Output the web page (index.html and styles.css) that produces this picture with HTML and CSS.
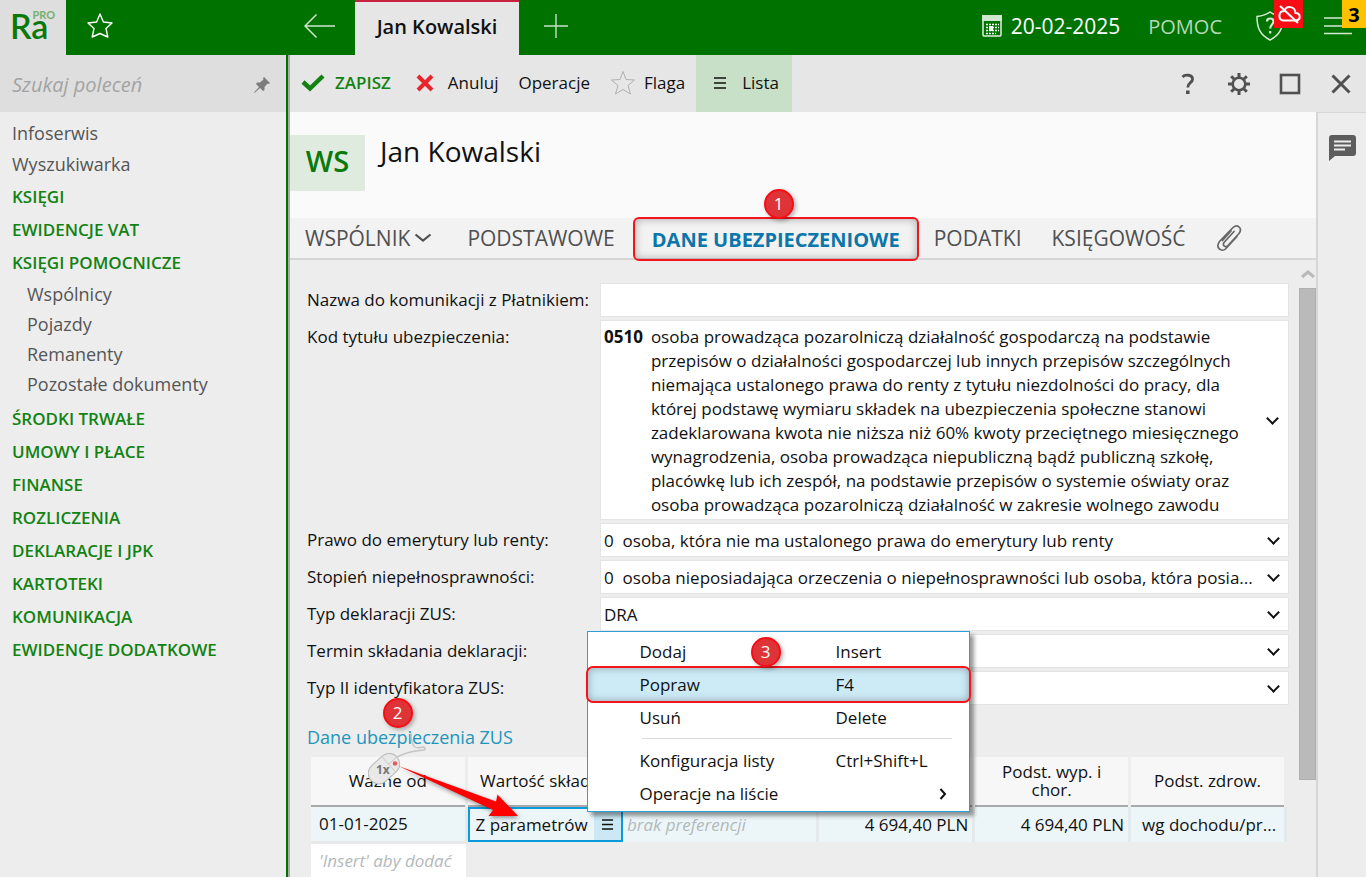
FILE: index.html
```
<!DOCTYPE html>
<html lang="pl">
<head>
    <meta charset="UTF-8">
    <meta name="viewport" content="width=device-width, initial-scale=1.0">
    <title>Jan Kowalski</title>
    <link rel="stylesheet" href="styles.css">
</head>
<body>
    <header class="topbar">
        <div class="logo">
            <span class="logo-ra">Ra</span><span class="logo-pro">PRO</span>
        </div>
        <button class="top-btn star-btn" aria-label="Ulubione">
            <svg width="28" height="28" viewBox="0 0 28 28" fill="none" stroke="#fff" stroke-width="1.4" stroke-linejoin="round"><path d="M14 2 L17.4 10 L26 11 L20 16.600 L21.800 25 L14 21.500 L6.200 25 L8 16.600 L2 11 L10.600 10 Z"/></svg>
        </button>
        <button class="top-btn back-btn" aria-label="Wstecz">
            <svg width="32" height="26" viewBox="0 0 32 26" fill="none" stroke="#d0e6d0" stroke-width="1.5"><path d="M31 13 H1 M12.500 1.500 L1 13 L12.500 24.500"/></svg>
        </button>
        <button class="window-tab">Jan Kowalski</button>
        <button class="top-btn add-btn" aria-label="Nowa karta">
            <svg width="24" height="24" viewBox="0 0 24 24" stroke="#c6e0c6" stroke-width="1.400"><path d="M12 0 V24 M0 12 H24"/></svg>
        </button>
        <div class="top-right">
            <button class="top-btn date-btn">
                <svg width="20" height="22" viewBox="0 0 20 22">
                    <rect x="1" y="1" width="18" height="20" rx="1" fill="none" stroke="#e4f1e4" stroke-width="1.500"/>
                    <rect x="0" y="0" width="20" height="6" fill="#cfe6cf"/>
                    <path d="M4 9.500 H17 M4 12.500 H17 M4 15.500 H17 M4 18.500 H14" stroke="#fff" stroke-width="1.700" stroke-dasharray="2 1"/>
                    <rect x="7" y="11" width="4" height="5" fill="#fff"/>
                </svg>
                20-02-2025
            </button>
            <button class="top-btn help-btn">POMOC</button>
            <button class="top-btn shield-btn" aria-label="Ochrona">
                <svg width="28" height="30" viewBox="0 0 28 30" fill="none" stroke="#d5e9d5" stroke-width="1.500"><path d="M14 1 C10 4 6 5 1 5.500 C1 17 4 24 14 29 C24 24 27 17 27 5.500 C22 5 18 4 14 1 Z"/><path d="M11 10.500 C11 6.500 17.500 6.500 17.500 10.500 C17.500 13.500 14.200 13.500 14.200 17.500 M14.200 20 V22.500" stroke-width="2.200"/></svg>
                <span class="cloud-badge">
                    <svg width="24" height="20" viewBox="0 0 24 20" fill="none" stroke="#fff" stroke-width="2"><path d="M6 16.500 H19 C24 16 24 9 18.500 9 C18 2 9 1 7.500 7 C1 7 1 15.500 6 16.500 Z"/><path d="M3 2 L21 19"/></svg>
                </span>
            </button>
            <button class="top-btn menu-btn" aria-label="Menu">
                <svg width="28" height="18" viewBox="0 0 28 18" stroke="#d5e9d5" stroke-width="1.500"><path d="M0 1 H28 M0 9 H28 M0 16.500 H28"/></svg>
                <span class="count-badge">3</span>
            </button>
        </div>
    </header>

    <div class="workspace">
        <aside class="sidebar">
            <div class="search">
                <input type="text" class="search-input" placeholder="Szukaj poleceń" aria-label="Szukaj poleceń">
                <svg width="18" height="18" viewBox="0 0 18 18" fill="#7d7d7d"><path d="M11 1 L17 7 L15.500 8 L14.500 7.500 L11.500 11 L11.500 14 L10 15 L7 12 L1.500 17 L1 16.500 L6 11 L3 8 L4 6.500 L7 6.500 L10.500 3.500 L10 2 Z"/></svg>
            </div>
            <nav class="nav">
                <a href="#" class="nav-link">Infoserwis</a>
                <a href="#" class="nav-link">Wyszukiwarka</a>
                <a href="#" class="nav-section">KSIĘGI</a>
                <a href="#" class="nav-section">EWIDENCJE VAT</a>
                <a href="#" class="nav-section">KSIĘGI POMOCNICZE</a>
                <div class="nav-sub">
                    <a href="#">Wspólnicy</a>
                    <a href="#">Pojazdy</a>
                    <a href="#">Remanenty</a>
                    <a href="#">Pozostałe dokumenty</a>
                </div>
                <a href="#" class="nav-section">ŚRODKI TRWAŁE</a>
                <a href="#" class="nav-section">UMOWY I PŁACE</a>
                <a href="#" class="nav-section">FINANSE</a>
                <a href="#" class="nav-section">ROZLICZENIA</a>
                <a href="#" class="nav-section">DEKLARACJE I JPK</a>
                <a href="#" class="nav-section">KARTOTEKI</a>
                <a href="#" class="nav-section">KOMUNIKACJA</a>
                <a href="#" class="nav-section">EWIDENCJE DODATKOWE</a>
            </nav>
        </aside>

        <main class="main">
            <div class="toolbar">
                <button class="tool save">
                    <svg width="24" height="18" viewBox="0 0 24 18" fill="none" stroke="#128212" stroke-width="4.500"><path d="M2 8 L9 14.500 L22 2"/></svg>
                    ZAPISZ
                </button>
                <button class="tool cancel">
                    <svg width="18" height="18" viewBox="0 0 18 18" stroke="#e8252b" stroke-width="4"><path d="M2 2 L16 16 M16 2 L2 16"/></svg>
                    Anuluj
                </button>
                <button class="tool operations">Operacje</button>
                <button class="tool flag">
                    <svg width="26" height="26" viewBox="0 0 26 26" fill="none" stroke="#b0b0b0"><path d="M13 1.500 L16 9.500 L24.500 10 L18 15.500 L20.500 24 L13 19.500 L5.500 24 L8 15.500 L1.500 10 L10 9.500 Z"/></svg>
                    Flaga
                </button>
                <button class="tool list">
                    <svg width="12" height="12" viewBox="0 0 12 12" stroke="#111" stroke-width="1.500"><path d="M0 1 H12 M0 6 H12 M0 11 H12"/></svg>
                    Lista
                </button>
                <div class="window-tools">
                    <button class="icon-btn" aria-label="Pomoc">
                        <svg width="22" height="22" viewBox="0 0 22 22" fill="none" stroke="#505050" stroke-width="2.800"><path d="M5.500 4 C8 1 16 1.500 15.500 6.500 C15.200 10 10.800 9.500 10.800 14.500"/><path d="M10.800 17.500 V21" stroke-width="3.600"/></svg>
                    </button>
                    <button class="icon-btn" aria-label="Ustawienia">
                        <svg width="22" height="22" viewBox="0 0 22 22" fill="none" stroke="#505050"><circle cx="11" cy="11" r="6.300" stroke-width="2.600"/><path d="M11 0 V4 M11 18 V22 M0 11 H4 M18 11 H22 M3.200 3.200 L6 6 M16 16 L18.800 18.800 M3.200 18.800 L6 16 M16 6 L18.800 3.200" stroke-width="3"/></svg>
                    </button>
                    <button class="icon-btn" aria-label="Maksymalizuj">
                        <svg width="22" height="22" viewBox="0 0 22 22" fill="none" stroke="#505050" stroke-width="2.600"><rect x="2" y="2" width="18" height="18"/></svg>
                    </button>
                    <button class="icon-btn" aria-label="Zamknij">
                        <svg width="22" height="22" viewBox="0 0 22 22" stroke="#505050" stroke-width="3"><path d="M2.500 2.500 L19.500 19.500 M19.500 2.500 L2.500 19.500"/></svg>
                    </button>
                </div>
            </div>

            <div class="content">
                <section class="document">
                    <div class="title-bar">
                        <div class="avatar">WS</div>
                        <h1>Jan Kowalski</h1>
                    </div>

                    <div class="tabs">
                        <button class="tab tab-partner">
                            WSPÓLNIK
                            <svg width="18" height="12" viewBox="0 0 18 12" fill="none" stroke="#505050" stroke-width="2.200"><path d="M1.500 2.500 L9 8.500 L16.500 2.500"/></svg>
                        </button>
                        <button class="tab tab-basic">PODSTAWOWE</button>
                        <button class="tab tab-active">DANE UBEZPIECZENIOWE<span class="marker marker-1">1</span></button>
                        <button class="tab">PODATKI</button>
                        <button class="tab tab-books">KSIĘGOWOŚĆ</button>
                        <button class="tab tab-clip" aria-label="Załączniki">
                            <svg width="26" height="28" viewBox="0 0 26 28" fill="none" stroke="#686868" stroke-width="1.700" stroke-linecap="round"><path d="M18 7.500 L8 18.500 C6 21.500 9.500 24 12 21.500 L23 9.500 C27 4 21 -1 16.500 4 L3.500 17.500 C-1 23.500 5.500 29 10 24.500 L21 12.500 M15 7 L6.500 16.500"/></svg>
                        </button>
                    </div>

                    <div class="body">
                        <div class="form-area">
                            <form class="form">
                                <label for="name">Nazwa do komunikacji z Płatnikiem:</label>
                                <input type="text" id="name" class="field">

                                <label for="code">Kod tytułu ubezpieczenia:</label>
                                <button type="button" id="code" class="field code-field" aria-haspopup="listbox">
                                    <b>0510</b>
                                    <span>osoba prowadząca pozarolniczą działalność gospodarczą na podstawie<br>przepisów o działalności gospodarczej lub innych przepisów szczególnych<br>niemająca ustalonego prawa do renty z tytułu niezdolności do pracy, dla<br>której podstawę wymiaru składek na ubezpieczenia społeczne stanowi<br>zadeklarowana kwota nie niższa niż 60% kwoty przeciętnego miesięcznego<br>wynagrodzenia, osoba prowadząca niepubliczną bądź publiczną szkołę,<br>placówkę lub ich zespół, na podstawie przepisów o systemie oświaty oraz<br>osoba prowadząca pozarolniczą działalność w zakresie wolnego zawodu</span>
                                </button>

                                <label for="pension">Prawo do emerytury lub renty:</label>
                                <div class="select">
                                    <select id="pension" class="field"><option>0&nbsp; osoba, która nie ma ustalonego prawa do emerytury lub renty</option></select>
                                </div>

                                <label for="disability">Stopień niepełnosprawności:</label>
                                <div class="select">
                                    <select id="disability" class="field"><option>0&nbsp; osoba nieposiadająca orzeczenia o niepełnosprawności lub osoba, która posia...</option></select>
                                </div>

                                <label for="declaration">Typ deklaracji ZUS:</label>
                                <div class="select">
                                    <select id="declaration" class="field"><option>DRA</option></select>
                                </div>

                                <label for="deadline">Termin składania deklaracji:</label>
                                <div class="select">
                                    <select id="deadline" class="field"><option></option></select>
                                </div>

                                <label for="ident">Typ II identyfikatora ZUS:</label>
                                <div class="select">
                                    <select id="ident" class="field"><option></option></select>
                                </div>
                            </form>

                            <h2>Dane ubezpieczenia ZUS</h2>

                            <table class="insurance">
                                <thead>
                                    <tr>
                                        <th class="col-from">Ważne od</th>
                                        <th class="col-value">Wartość składek</th>
                                        <th class="col-pref"></th>
                                        <th class="col-base"></th>
                                        <th class="col-base">Podst. wyp. i<br>chor.</th>
                                        <th class="col-health">Podst. zdrow.</th>
                                    </tr>
                                </thead>
                                <tbody>
                                    <tr>
                                        <td>01-01-2025</td>
                                        <td class="cell-active">
                                            <div class="editor">
                                                <input type="text" value="Z parametrów" aria-label="Wartość składek">
                                                <button class="editor-btn" aria-label="Lista">
                                                    <svg width="11" height="12" viewBox="0 0 11 12" stroke="#111" stroke-width="1.500"><path d="M0 1 H11 M0 5.500 H11 M0 10 H11"/></svg>
                                                </button>

                                                <svg class="pointer" width="170" height="140" viewBox="0 0 170 140">
                                                    <path d="M43 42 C43 60 50 57 56 56 C62 62 44 56 28 67" fill="none" stroke="#c4c4c4" stroke-width="1.500"/>
                                                    <g transform="rotate(-42 16 77)">
                                                        <rect x="-2" y="67" width="35" height="21" rx="10.500" fill="#e9e9e9" stroke="#b9b9b9"/>
                                                        <path d="M22 67 V88 M22 77.500 H33" stroke="#cfcfcf"/>
                                                    </g>
                                                    <circle cx="27" cy="72.500" r="2.200" fill="#e55"/>
                                                    <text x="8" y="83">1x</text>
                                                    <path class="arrow" d="M30.500 75 L128 110.500 L129.500 103.500 L150 125 L120.500 125 L125 119 Z"/>
                                                </svg>
                                                <span class="marker marker-2">2</span>

                                                <div class="menu" role="menu">
                                                    <button class="menu-item" role="menuitem"><span>Dodaj</span><span>Insert</span></button>
                                                    <button class="menu-item menu-current" role="menuitem"><span>Popraw</span><span>F4</span></button>
                                                    <button class="menu-item" role="menuitem"><span>Usuń</span><span>Delete</span></button>
                                                    <hr>
                                                    <button class="menu-item" role="menuitem"><span>Konfiguracja listy</span><span>Ctrl+Shift+L</span></button>
                                                    <button class="menu-item" role="menuitem">
                                                        <span>Operacje na liście</span>
                                                        <svg class="submenu" width="8" height="12" viewBox="0 0 8 12" fill="none" stroke="#111" stroke-width="2"><path d="M1.500 1 L6 6 L1.500 11"/></svg>
                                                    </button>
                                                    <span class="marker marker-3">3</span>
                                                </div>
                                            </div>
                                        </td>
                                        <td class="empty">brak preferencji</td>
                                        <td class="amount">4 694,40 PLN</td>
                                        <td class="amount">4 694,40 PLN</td>
                                        <td class="health">wg dochodu/pr...</td>
                                    </tr>
                                    <tr class="insert-row">
                                        <td class="empty">'Insert' aby dodać</td>
                                    </tr>
                                </tbody>
                            </table>
                        </div>

                        <div class="scrollbar">
                            <svg width="14" height="10" viewBox="0 0 14 10" fill="none" stroke="#b9b9b9" stroke-width="3"><path d="M1 8 L7 3 L13 8"/></svg>
                            <div class="thumb"></div>
                        </div>
                    </div>
                </section>

                <aside class="rail">
                    <button class="icon-btn" aria-label="Notatki">
                        <svg width="27" height="26" viewBox="0 0 27 26"><path d="M3 0 H24 Q27 0 27 3 V18 Q27 21 24 21 H6 L0 26 V3 Q0 0 3 0 Z" fill="#5d5d5d"/><path d="M5 6.500 H22 M5 10.500 H22 M5 14.500 H16" stroke="#ededed" stroke-width="2"/></svg>
                    </button>
                </aside>
            </div>
        </main>
    </div>
</body>
</html>
```
FILE: styles.css
```
* {
    box-sizing: border-box;
    margin: 0;
    padding: 0;
}

body {
    display: flex;
    flex-direction: column;
    height: 100vh;
    overflow: hidden;
    background-color: #ededed;
    color: #111;
    font-family: "Open Sans", "Noto Sans", sans-serif;
    font-size: 17px;
}

button,
input,
select {
    font: inherit;
    color: inherit;
    background: none;
    border: none;
    outline: none;
}

button {
    cursor: pointer;
}

a {
    text-decoration: none;
}

svg {
    flex: none;
}

/* top bar */
.topbar {
    display: flex;
    flex: none;
    height: 55px;
    background-color: #007200;
}

.logo {
    display: flex;
    width: 66px;
    padding-left: 10px;
    background-color: #dedede;
    color: #0a790a;
    font-family: Lato, sans-serif;
}

.logo-ra {
    font-size: 34px;
    line-height: 52px;
    font-weight: 600;
}

.logo-pro {
    margin-left: -16px;
    font-size: 11px;
    line-height: 30px;
    font-weight: 700;
    color: #73b073;
}

.top-btn {
    display: flex;
    align-items: center;
    position: relative;
    height: 52px;
}

.star-btn {
    margin-left: 20px;
}

.back-btn {
    margin-left: 190px;
}

.window-tab {
    width: 164px;
    height: 55px;
    margin-left: 19px;
    padding-bottom: 4px;
    border-top: 2px solid #c8203f;
    background-color: #e6e6e6;
    font-size: 20px;
    font-weight: 600;
}

.add-btn {
    margin-left: 25px;
}

.top-right {
    display: flex;
    margin-left: auto;
    color: #fff;
    font-size: 20px;
}

.date-btn {
    gap: 9px;
    font-size: 21px;
}

.help-btn {
    margin-left: 28px;
    color: #b7d8b7;
}

.shield-btn {
    margin-left: 34px;
}

.menu-btn {
    margin-left: 40px;
    padding-right: 14px;
}

.cloud-badge,
.count-badge {
    display: flex;
    align-items: center;
    justify-content: center;
    position: absolute;
    top: 0;
    height: 28px;
}

.cloud-badge {
    left: 18px;
    width: 29px;
    background-color: #f90d14;
}

.count-badge {
    right: 0;
    width: 24px;
    background-color: #ffc000;
    color: #000;
    font-weight: 700;
}

/* sidebar */
.workspace {
    display: flex;
    flex: 1;
    min-height: 0;
}

.sidebar {
    flex: none;
    width: 288px;
    border-right: 2px solid #007200;
}

.search {
    display: flex;
    align-items: center;
    height: 57px;
    padding: 2px 15px 0 12px;
    background-color: #dedede;
}

.search-input {
    flex: 1;
    min-width: 0;
    font-size: 20px;
    font-style: italic;
}

.search-input::placeholder {
    color: #a3a3a3;
}

.nav {
    display: flex;
    flex-direction: column;
    padding: 6px 12px;
}

.nav-link {
    line-height: 31px;
    font-size: 18px;
    color: #555;
}

.nav-section {
    line-height: 33px;
    font-weight: 600;
    color: #128212;
}

.nav-sub {
    display: flex;
    flex-direction: column;
    padding: 0 0 3px 15px;
    line-height: 30px;
    font-size: 18px;
}

.nav-sub a {
    color: #555;
}

/* toolbar */
.main {
    display: flex;
    flex-direction: column;
    flex: 1;
    min-width: 0;
    border-left: 2px solid #ababab;
}

.toolbar {
    display: flex;
    flex: none;
    height: 57px;
    padding-left: 11px;
    background-color: #e6e6e6;
}

.tool {
    display: flex;
    align-items: center;
    gap: 10px;
    padding-bottom: 2px;
}

.save {
    color: #128212;
    font-weight: 600;
}

.cancel {
    gap: 14px;
    margin-left: 25px;
}

.operations {
    margin-left: 20px;
}

.flag {
    gap: 8px;
    margin-left: 20px;
}

.list {
    gap: 16px;
    width: 96px;
    margin-left: 11px;
    padding-left: 18px;
    background-color: #c8dfc8;
}

.window-tools {
    display: flex;
    gap: 29px;
    margin-left: auto;
    padding-right: 14px;
}

.icon-btn {
    display: flex;
    align-items: center;
}

.content {
    display: flex;
    flex: 1;
    min-height: 0;
}

.rail {
    flex: none;
    width: 50px;
    padding: 22px 0 0 11px;
    border-top: 1px solid #d6d6d6;
    border-left: 2px solid #d6d6d6;
}

/* document */
.document {
    display: flex;
    flex-direction: column;
    flex: 1;
    min-width: 0;
}

.title-bar {
    display: flex;
    flex: none;
    gap: 15px;
    height: 106px;
    padding-top: 23px;
    background-color: #fafafa;
}

.title-bar h1 {
    line-height: 32px;
    font-size: 28px;
    font-weight: 400;
}

.avatar {
    width: 75px;
    height: 56px;
    line-height: 52px;
    background-color: #e0ebe0;
    color: #0a790a;
    font-size: 29px;
    font-weight: 600;
    text-align: center;
}

.tabs {
    display: flex;
    flex: none;
    height: 42px;
    padding-left: 15px;
    border-bottom: 2px solid #d6d6d6;
    background-color: #f2f2f2;
    color: #505050;
    font-size: 21px;
}

.tab {
    display: flex;
    align-items: center;
    gap: 4px;
    white-space: nowrap;
}

.tab-basic {
    margin: 0 18px 0 35px;
}

.tab-active {
    justify-content: center;
    position: relative;
    width: 286px;
    height: 44px;
    margin: -1px 15px 0 0;
    border: 2px solid #f2151b;
    border-radius: 6px;
    box-shadow: inset 0 0 9px rgba(0, 0, 0, 0.3);
    color: #0b76aa;
    font-size: 20px;
    font-weight: 700;
}

.tab-books {
    margin: 0 30px;
}

.marker {
    position: absolute;
    width: 30px;
    height: 30px;
    line-height: 26px;
    border: 2px solid #f90d14;
    border-radius: 50%;
    background-color: #de3438;
    box-shadow: 2px 2px 4px rgba(0, 0, 0, 0.3);
    color: #fff;
    font-size: 17px;
    font-weight: 400;
    text-align: center;
}

.marker-1 {
    top: -30px;
    left: 129px;
}

.marker-2 {
    left: -87px;
    bottom: 112px;
}

.marker-3 {
    top: 5px;
    left: 163px;
}

.body {
    display: flex;
    flex: 1;
    min-height: 0;
}

.form-area {
    flex: 1;
    min-width: 0;
    padding: 23px 10px 0 17px;
}

.form {
    display: grid;
    grid-template-columns: 293px 1fr;
    row-gap: 3px;
}

.form label {
    line-height: 34px;
}

.field {
    width: 100%;
    height: 34px;
    padding: 0 3px;
    border: 1px solid #e4e4e4;
    background-color: #fff;
}

.select,
.code-field {
    position: relative;
}

.select {
    height: 34px;
}

.select .field {
    appearance: none;
    padding-right: 30px;
    text-overflow: ellipsis;
}

.select::after,
.code-field::after {
    content: "";
    position: absolute;
    top: calc(50% - 6px);
    right: 11px;
    width: 7px;
    height: 7px;
    border: solid #111;
    border-width: 0 2px 2px 0;
    transform: rotate(45deg);
    pointer-events: none;
}

.code-field {
    display: flex;
    gap: 8px;
    height: 200px;
    padding-top: 4px;
    line-height: 24px;
    text-align: left;
    white-space: nowrap;
}

.form-area h2 {
    padding: 16px 0 4px;
    line-height: 32px;
    color: #2196bd;
    font-size: 18px;
    font-weight: 400;
}

/* insurance table */
.insurance {
    width: calc(100% - 6px);
    margin-left: 4px;
    border-collapse: collapse;
    table-layout: fixed;
}

.insurance th {
    height: 49px;
    border-right: 3px solid #ededed;
    border-bottom: 2px solid #a9a9a9;
    background-color: #f7f7f7;
    line-height: 18px;
    font-weight: 400;
}

.insurance td {
    height: 35px;
    padding: 0 8px;
    border-right: 3px solid #e4eaec;
    background-color: #ecf6f9;
    white-space: nowrap;
}

.col-from {
    width: 155px;
}

.col-base,
.col-health {
    width: 16%;
}

.col-pref {
    width: 20%;
}

.insurance .amount {
    padding: 0 4px;
    text-align: right;
}

.insurance .health {
    padding-left: 11px;
}

.insurance .empty {
    padding: 0 4px;
    color: #b3b9bb;
    font-style: italic;
}

.insurance .insert-row td {
    padding-left: 8px;
    border-top: 3px solid #e8e8e8;
    border-right: none;
    background-color: #fff;
}

.insurance .cell-active {
    padding: 0;
    border-right: none;
}

.editor {
    display: flex;
    position: relative;
    height: 35px;
    border: 2px solid #0a9bdc;
}

.editor input {
    flex: 1;
    min-width: 0;
    padding-left: 6px;
}

.editor-btn {
    display: flex;
    align-items: center;
    justify-content: center;
    width: 27px;
    background-color: #cbe8f4;
}

.pointer {
    position: absolute;
    left: -102px;
    bottom: 9px;
    fill: #777;
    font-size: 12px;
    font-weight: 700;
}

.arrow {
    fill: #f00;
    filter: drop-shadow(1px 2px 2px rgba(0, 0, 0, 0.4));
}

/* context menu */
.menu {
    position: absolute;
    z-index: 2;
    left: 117px;
    bottom: 28px;
    width: 383px;
    padding: 3px 0 1px;
    border: 1px solid #2c9fd3;
    background-color: #fff;
    box-shadow: 4px 4px 4px rgba(0, 0, 0, 0.4);
}

.menu-item {
    display: grid;
    grid-template-columns: 196px 1fr;
    align-items: center;
    width: 100%;
    height: 33px;
    padding-left: 52px;
    text-align: left;
}

.menu-current {
    background-color: #cdebf7;
    outline: 2px solid #f2151b;
    border-radius: 5px;
    box-shadow: inset 0 0 9px rgba(0, 0, 0, 0.3);
}

.menu hr {
    margin: 4px 17px 5px 54px;
    border: none;
    border-top: 1px solid #dcdcdc;
}

.submenu {
    justify-self: end;
    margin-right: 22px;
}

/* scrollbar */
.scrollbar {
    display: flex;
    flex-direction: column;
    align-items: center;
    flex: none;
    width: 17px;
    padding-top: 9px;
}

.thumb {
    width: 100%;
    height: 81%;
    margin-top: 9px;
    border: 1px solid #b0b0b0;
    background-color: #bababa;
}
```
